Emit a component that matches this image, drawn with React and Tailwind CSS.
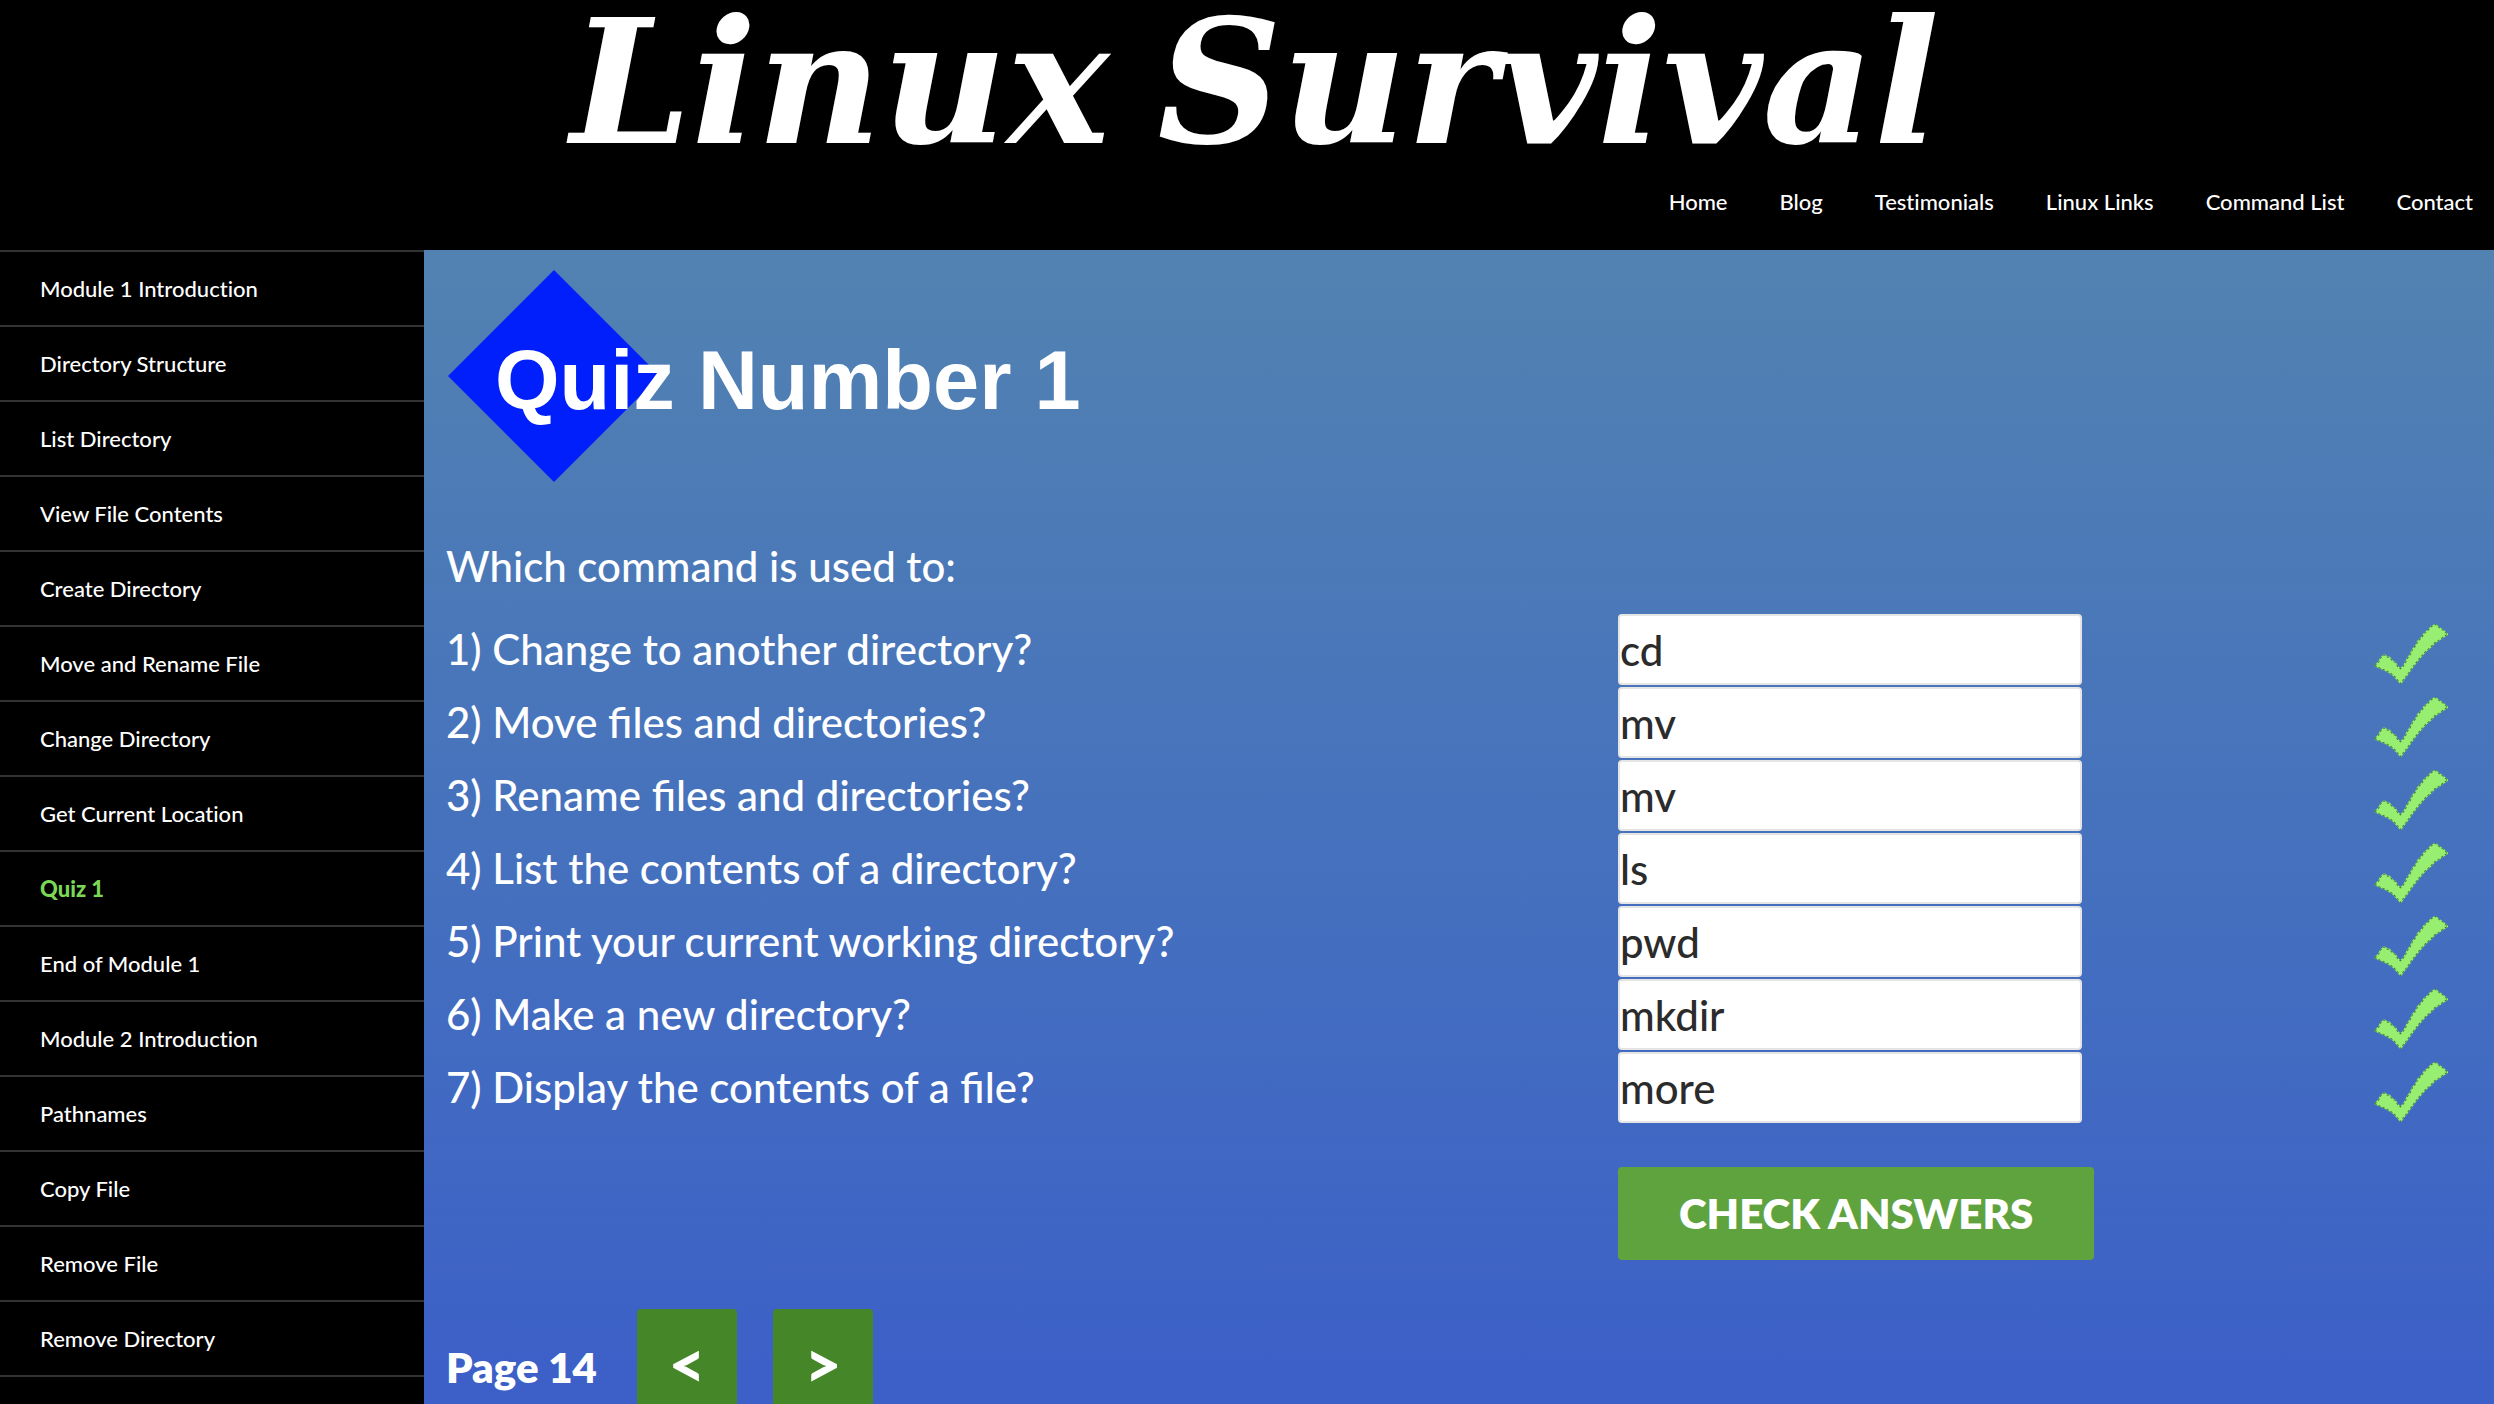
import React, { useState } from "react";

const navLinks = ["Home", "Blog", "Testimonials", "Linux Links", "Command List", "Contact"];

const lessons = [
  "Module 1 Introduction",
  "Directory Structure",
  "List Directory",
  "View File Contents",
  "Create Directory",
  "Move and Rename File",
  "Change Directory",
  "Get Current Location",
  "Quiz 1",
  "End of Module 1",
  "Module 2 Introduction",
  "Pathnames",
  "Copy File",
  "Remove File",
  "Remove Directory",
];

const questions = [
  ["1) Change to another directory?", "cd"],
  ["2) Move files and directories?", "mv"],
  ["3) Rename files and directories?", "mv"],
  ["4) List the contents of a directory?", "ls"],
  ["5) Print your current working directory?", "pwd"],
  ["6) Make a new directory?", "mkdir"],
  ["7) Display the contents of a file?", "more"],
];

function CheckMark() {
  const outline =
    "M2 121 L13 112 L20 98 L30 90 L38 96 L45 97 L54 108 L62 112 L69 124 L77 131 L84 125 L92 113 L97 101 L106 89 L112 75 L122 63 L128 50 L138 41 L147 27 L158 18 L167 8 L179 1 L190 10 L202 18 L215 30 L202 38 L190 47 L178 54 L166 67 L152 79 L140 92 L130 104 L118 119 L106 135 L95 151 L86 162 L78 174 L67 161 L56 149 L44 141 L30 134 L18 129 Z";
  return (
    <svg viewBox="0 0 216 175" className="h-[60px] w-[74px]" role="img" aria-label="Correct">
      <path d={outline} fill="#98ee70" stroke="#98ee70" strokeWidth="4" />
      <path d={outline} fill="none" stroke="#3f7a3c" strokeWidth="3" strokeDasharray="7 6" />
    </svg>
  );
}

function Header() {
  return (
    <header className="flex h-[250px] shrink-0 flex-col items-center justify-between bg-black text-white">
      <h1 className="flex h-[166px] items-center gap-12 pl-4 font-['DejaVu_Serif',serif] text-[172px] leading-none font-bold italic">
        <span>Linux</span>
        <span>Survival</span>
      </h1>
      <nav className="flex h-[84px] items-center gap-[52px] self-end pr-[21px] pb-3 text-[22px] leading-7 font-medium [font-variant-ligatures:none]">
        {navLinks.map((label) => (
          <a key={label} href="#">
            {label}
          </a>
        ))}
      </nav>
    </header>
  );
}

function Sidebar() {
  return (
    <aside className="w-[424px] shrink-0 bg-black text-[22px] leading-7 font-medium text-white [font-variant-ligatures:none]">
      <ul>
        {lessons.map((label) => (
          <li key={label} className="h-[75px] border-t-2 border-[#333333]">
            <a
              href="#"
              className={
                label === "Quiz 1"
                  ? "flex h-full items-center pl-10 font-black text-[#7cd756]"
                  : "flex h-full items-center pl-10"
              }
            >
              {label}
            </a>
          </li>
        ))}
        <li className="border-t-2 border-[#333333]" />
      </ul>
    </aside>
  );
}

function QuizTitle() {
  return (
    <div className="flex h-[212px] items-center pl-[2px]">
      <svg viewBox="0 0 212 212" className="h-[212px] w-[212px] shrink-0">
        <path d="M106 0 L212 106 L106 212 L0 106 Z" fill="#001ffa" />
      </svg>
      <h2 className="relative -ml-[165px] pt-2 font-['Liberation_Sans',sans-serif] text-[83px] leading-none font-bold">
        Quiz Number 1
      </h2>
    </div>
  );
}

function Quiz() {
  const [answers, setAnswers] = useState(questions.map((q) => q[1]));
  return (
    <main className="flex-1 bg-linear-to-b from-[#5282b1] to-[#3c5fc8] px-[22px] pt-5 text-[42px] leading-[53px] font-medium text-white">
      <QuizTitle />
      <p className="mt-[58px]">Which command is used to:</p>
      <table className="mt-5 w-full table-fixed border-collapse">
        <colgroup>
          <col />
          <col className="w-[600px]" />
          <col className="w-[254px]" />
        </colgroup>
        <tbody>
          {questions.map(([text], i) => (
            <tr key={text} className="h-[73px]">
              <td className="p-0">
                <label htmlFor={"answer-" + i}>{text}</label>
              </td>
              <td className="p-0">
                <input
                  id={"answer-" + i}
                  type="text"
                  value={answers[i]}
                  onChange={(e) => setAnswers(answers.map((a, j) => (j === i ? e.target.value : a)))}
                  className="block h-[71px] w-[464px] rounded-sm border-2 border-[#e5e5e5] bg-white text-[#2b2b2b]"
                />
              </td>
              <td className="p-0 pt-2">
                <div className="flex justify-end pr-6">
                  <CheckMark />
                </div>
              </td>
            </tr>
          ))}
          <tr>
            <td />
            <td className="p-0 pt-[43px]" colSpan={2}>
              <button
                type="button"
                className="block h-[93px] rounded-sm bg-[#5fa33f] px-[61px] font-extrabold whitespace-nowrap"
              >
                CHECK ANSWERS
              </button>
            </td>
          </tr>
        </tbody>
      </table>
      <div className="mt-[49px] flex items-center font-extrabold">
        <span className="pt-2">Page 14</span>
        <button type="button" aria-label="Previous page" className="ml-[40px] h-[108px] w-[100px] rounded-sm bg-[#458628] text-[64px] font-black">
          &lt;
        </button>
        <button type="button" aria-label="Next page" className="ml-[36px] h-[108px] w-[100px] rounded-sm bg-[#458628] text-[64px] font-black">
          &gt;
        </button>
      </div>
    </main>
  );
}

export default function App() {
  return (
    <div className="flex h-screen flex-col overflow-hidden bg-black font-['Lato',sans-serif]">
      <Header />
      <div className="flex min-h-0 flex-1">
        <Sidebar />
        <Quiz />
      </div>
    </div>
  );
}
